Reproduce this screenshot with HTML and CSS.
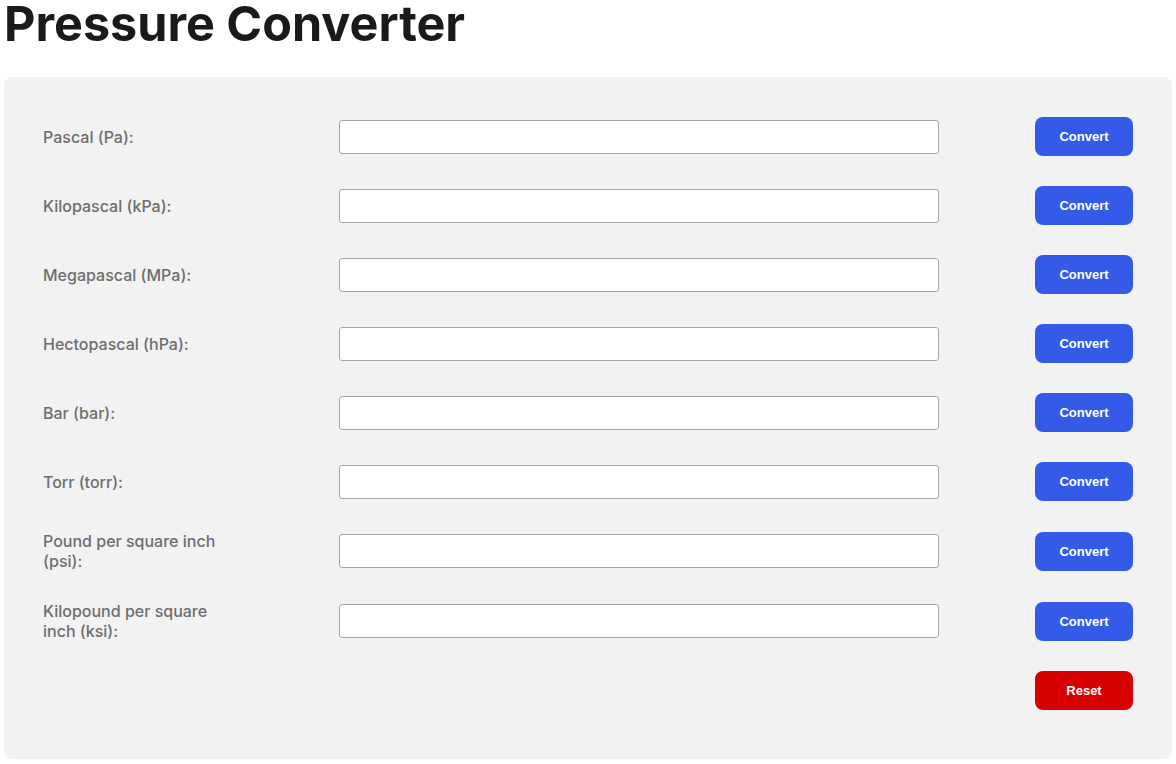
FILE: index.html
```html
<!DOCTYPE html>
<html>
<head>
<meta charset="utf-8">
<title>Pressure Converter</title>
<link rel="stylesheet" href="styles.css">
</head>
<body>
<h1 class="title">Pressure Converter</h1>
<div class="card">
  <form class="grid">
    <label class="label">Pascal (Pa):</label>
    <input class="field" type="text">
    <button class="btn" type="button">Convert</button>

    <label class="label">Kilopascal (kPa):</label>
    <input class="field" type="text">
    <button class="btn" type="button">Convert</button>

    <label class="label">Megapascal (MPa):</label>
    <input class="field" type="text">
    <button class="btn" type="button">Convert</button>

    <label class="label">Hectopascal (hPa):</label>
    <input class="field" type="text">
    <button class="btn" type="button">Convert</button>

    <label class="label">Bar (bar):</label>
    <input class="field" type="text">
    <button class="btn" type="button">Convert</button>

    <label class="label">Torr (torr):</label>
    <input class="field" type="text">
    <button class="btn" type="button">Convert</button>

    <label class="label">Pound per square inch (psi):</label>
    <input class="field" type="text">
    <button class="btn" type="button">Convert</button>

    <label class="label">Kilopound per square inch (ksi):</label>
    <input class="field" type="text">
    <button class="btn" type="button">Convert</button>

    <span></span>
    <span></span>
    <button class="btn btn-reset" type="reset">Reset</button>
  </form>
</div>
</body>
</html>
```
FILE: styles.css
```css
html, body {
  margin: 0;
  padding: 0;
  background: #ffffff;
}
body {
  padding: 0 4px;
  font-family: Inter, "Noto Sans", sans-serif;
}
.title {
  margin: 0;
  padding: 0 0 29px 0;
  font-family: Inter, sans-serif;
  font-size: 48.5px;
  line-height: 48px;
  font-weight: 700;
  color: #1a1a1a;
}
.card {
  background: #f2f2f2;
  border-radius: 8px;
  padding: 40px 39px 49px 39px;
}
.grid {
  margin: 0;
  display: grid;
  grid-template-columns: 296px 600px 1fr;
  row-gap: 30px;
  align-items: center;
}
.label {
  max-width: 185px;
  font-size: 16px;
  line-height: 20px;
  font-weight: 500;
  color: #6e6e6e;
}
.field {
  box-sizing: border-box;
  height: 34px;
  width: 600px;
  margin: 0;
  border: 1px solid #a6a6a6;
  border-radius: 3px;
  background: #ffffff;
}
.btn {
  justify-self: end;
  width: 98px;
  height: 39px;
  border: none;
  border-radius: 8px;
  background: #335be8;
  color: #ffffff;
  font-family: "Liberation Sans", Arial, sans-serif;
  font-size: 13px;
  font-weight: 700;
  cursor: pointer;
}
.btn-reset {
  background: #d60000;
}
```
